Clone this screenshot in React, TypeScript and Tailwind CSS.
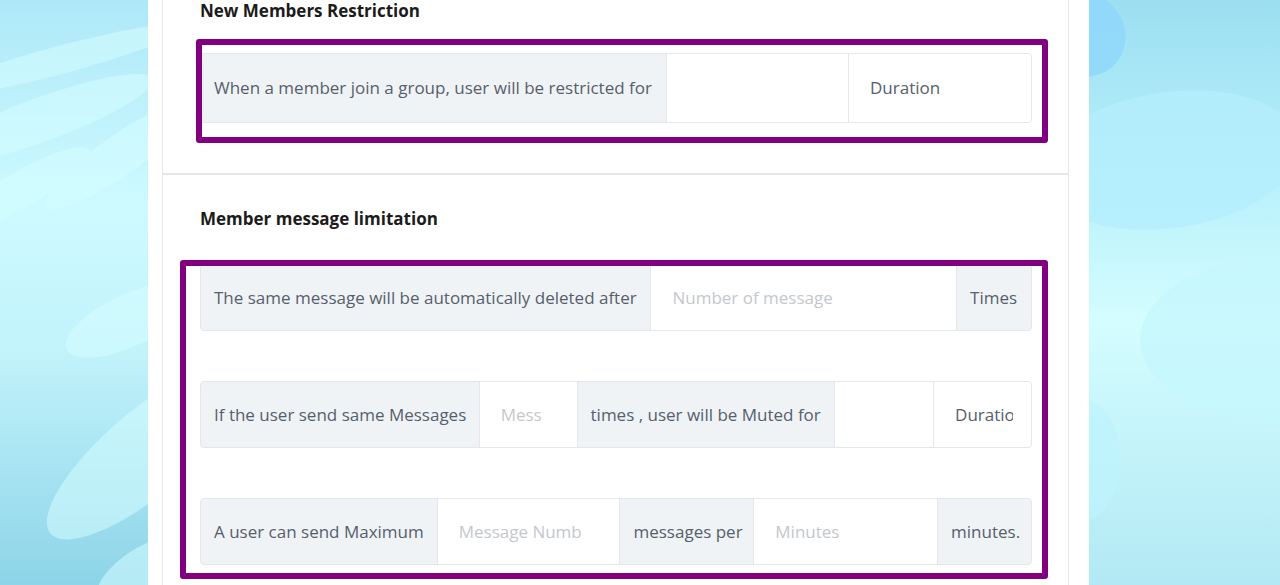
import React from 'react';

const font = { fontFamily: '"Open Sans", "Noto Sans", Arial, sans-serif' };

// background drawing behind the white panel
function Backdrop() {
  return (
    <svg className="absolute inset-0 h-full w-full" viewBox="0 0 1280 585" preserveAspectRatio="none">
      <defs>
        <linearGradient id="bgL" x1="0" y1="0" x2="0" y2="1">
          <stop offset="0" stopColor="#aee8f8" />
          <stop offset="0.35" stopColor="#cdfaff" />
          <stop offset="0.6" stopColor="#c2f3fb" />
          <stop offset="1" stopColor="#8dd4e8" />
        </linearGradient>
        <linearGradient id="bgR" x1="0" y1="0" x2="0" y2="1">
          <stop offset="0" stopColor="#9cdff1" />
          <stop offset="0.3" stopColor="#b7f0fb" />
          <stop offset="0.55" stopColor="#d4fdff" />
          <stop offset="1" stopColor="#b2e9f4" />
        </linearGradient>
      </defs>
      <rect x="0" y="0" width="640" height="585" fill="url(#bgL)" />
      <rect x="640" y="0" width="640" height="585" fill="url(#bgR)" />
      <g fill="#d6fdff" opacity="0.55">
        <ellipse cx="60" cy="60" rx="130" ry="14" transform="rotate(-15 60 60)" />
        <ellipse cx="40" cy="120" rx="120" ry="22" transform="rotate(-20 40 120)" />
        <ellipse cx="120" cy="155" rx="90" ry="20" transform="rotate(-35 120 155)" />
        <ellipse cx="20" cy="190" rx="80" ry="18" transform="rotate(-30 20 190)" />
        <ellipse cx="130" cy="320" rx="70" ry="26" transform="rotate(-25 130 320)" />
        <ellipse cx="150" cy="450" rx="130" ry="42" transform="rotate(-40 150 450)" />
        <ellipse cx="150" cy="575" rx="60" ry="30" transform="rotate(-30 150 575)" />
      </g>
      <ellipse cx="1085" cy="35" rx="40" ry="42" fill="#8fd6fb" opacity="0.8" transform="rotate(-30 1085 35)" />
      <ellipse cx="1170" cy="160" rx="130" ry="68" fill="#b4eefd" opacity="0.8" transform="rotate(-8 1170 160)" />
      <ellipse cx="1290" cy="340" rx="150" ry="85" fill="#c6f7fd" opacity="0.8" />
      <ellipse cx="1085" cy="460" rx="35" ry="60" fill="#bdf4fd" opacity="0.7" />
    </svg>
  );
}

function Label({ w, children, first, last }: { w: string; children: React.ReactNode; first?: boolean; last?: boolean }) {
  return (
    <div
      className={`${w} h-full flex items-center px-[13px] bg-[#f0f3f6] border border-[#e3e7eb] text-[#56606b] whitespace-nowrap overflow-hidden ${
        first ? 'rounded-l' : '-ml-px'
      } ${last ? 'rounded-r' : ''}`}
    >
      {children}
    </div>
  );
}

function Field({
  w,
  inner,
  placeholder,
  value,
  last,
}: {
  w: string;
  inner?: string;
  placeholder?: string;
  value?: string;
  last?: boolean;
}) {
  return (
    <div
      className={`${w} h-full flex items-center pl-[21px] bg-white border border-[#e3e7eb] whitespace-nowrap overflow-hidden -ml-px ${
        last ? 'rounded-r' : ''
      }`}
    >
      <span className={`${inner ?? ''} overflow-hidden ${value ? 'text-[#56606b]' : 'text-[#c4c8cc]'}`}>
        {value ?? placeholder}
      </span>
    </div>
  );
}

export default function App() {
  return (
    <div className="relative w-full h-[585px] overflow-hidden text-[17px]" style={font}>
      <Backdrop />
      <div className="relative ml-[148px] w-[941px] h-full bg-white pl-[14px] pr-[20px]">
        {/* New members */}
        <div className="border-x border-b-2 border-[#e4e6ea] pl-[37px] pr-[36px] pb-[50px]">
          <h3 className="font-bold text-[17px] leading-[22px] text-[#1b1b1b]">New Members Restriction</h3>
          <div className="relative mt-[31px]">
            <div className="flex h-[70px]">
              <Label w="w-[467px]" first>
                When a member join a group, user will be restricted for
              </Label>
              <Field w="w-[183px]" />
              <Field w="w-[184px]" value="Duration" last />
            </div>
            <div className="absolute -left-[4px] -top-[14px] -right-[16px] -bottom-[20px] border-[6px] border-[#800080] rounded-[3px] pointer-events-none" />
          </div>
        </div>

        {/* Member message limitation */}
        <div className="border-x border-[#e4e6ea] pl-[37px] pr-[36px] pt-[33px] h-full">
          <h3 className="font-bold text-[17px] leading-[22px] text-[#1b1b1b]">Member message limitation</h3>
          <div className="relative mt-[34px]">
            <div className="flex flex-col gap-[50px]">
              <div className="flex h-[67px]">
                <Label w="w-[452px]" first>
                  The same message will be automatically deleted after
                </Label>
                <Field w="w-[307px]" placeholder="Number of message" />
                <Label w="w-[76px]" last>
                  Times
                </Label>
              </div>
              <div className="flex h-[67px]">
                <Label w="w-[280px]" first>
                  If the user send same Messages
                </Label>
                <Field w="w-[99px]" inner="w-[40px]" placeholder="Message" />
                <Label w="w-[259px]">times , user will be Muted for</Label>
                <Field w="w-[100px]" />
                <Field w="w-[99px]" inner="w-[58px]" value="Duration" last />
              </div>
              <div className="flex h-[67px]">
                <Label w="w-[238px]" first>
                  A user can send Maximum
                </Label>
                <Field w="w-[184px]" inner="w-[122px]" placeholder="Message Number" />
                <Label w="w-[135px]">messages per</Label>
                <Field w="w-[185px]" placeholder="Minutes" />
                <Label w="w-[95px]" last>
                  minutes.
                </Label>
              </div>
            </div>
            <div className="absolute -left-[20px] -top-[4px] -right-[16px] -bottom-[14px] border-[6px] border-[#800080] rounded-[3px] pointer-events-none" />
          </div>
        </div>
      </div>
    </div>
  );
}
